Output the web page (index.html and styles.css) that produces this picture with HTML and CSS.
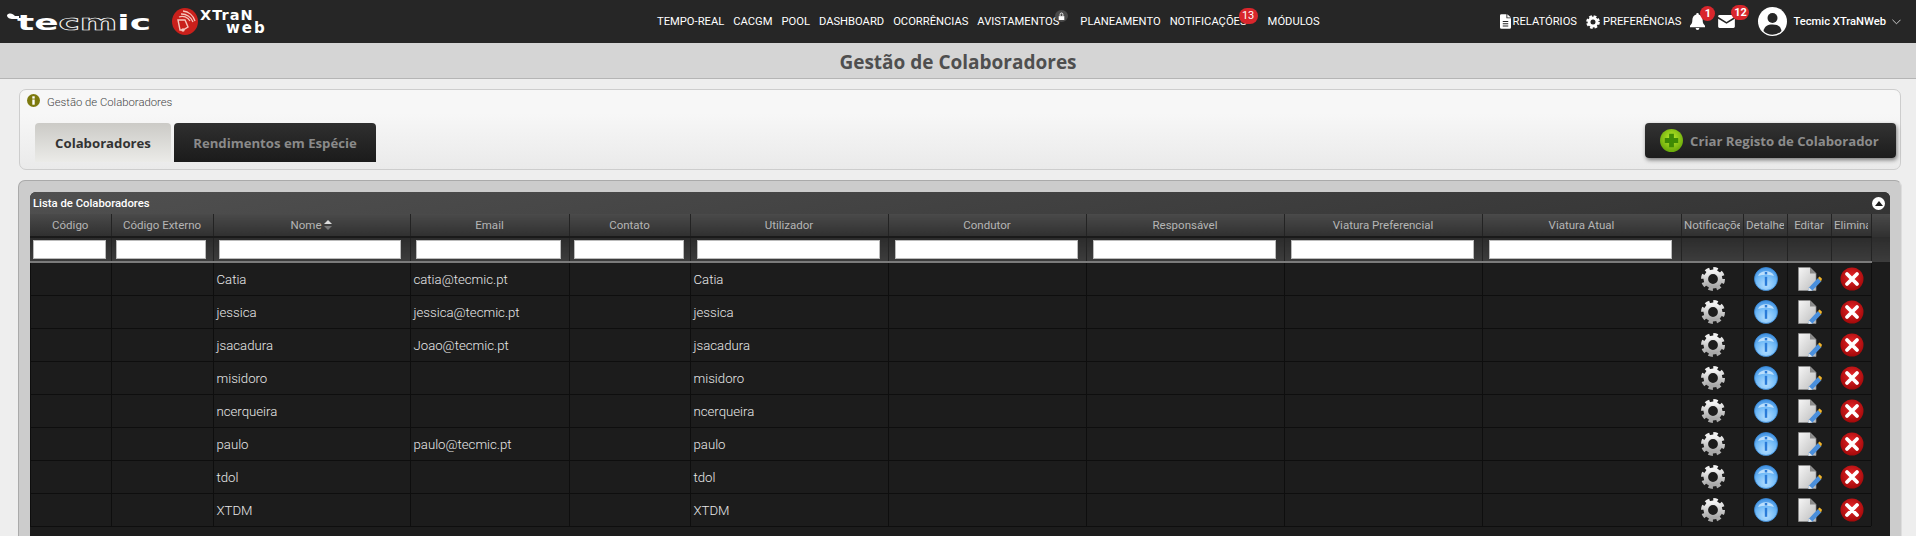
FILE: index.html
```html
<!DOCTYPE html>
<html lang="pt">
<head>
<meta charset="utf-8">
<title>Gestão de Colaboradores</title>
<link rel="stylesheet" href="styles.css">
</head>
<body>
<svg class="defs" width="0" height="0" aria-hidden="true">
  <defs>
    <linearGradient id="gGear" x1="0" y1="0" x2="0" y2="1"><stop offset="0" stop-color="#f2f2f2"/><stop offset="1" stop-color="#a8a8a8"/></linearGradient>
    <radialGradient id="gInfo" cx=".5" cy=".75" r=".75"><stop offset="0" stop-color="#b4deff"/><stop offset=".6" stop-color="#6fb9f7"/><stop offset="1" stop-color="#3f8fe0"/></radialGradient>
    <radialGradient id="gDel" cx=".5" cy=".4" r=".65"><stop offset="0" stop-color="#e8262a"/><stop offset="1" stop-color="#9c0606"/></radialGradient>
    <linearGradient id="gDoc" x1="0" y1="0" x2="1" y2="1"><stop offset="0" stop-color="#f6f6f6"/><stop offset="1" stop-color="#bdbdbd"/></linearGradient>
    <radialGradient id="gPlus" cx=".5" cy=".4" r=".65"><stop offset="0" stop-color="#bdec2c"/><stop offset="1" stop-color="#5fa206"/></radialGradient>
    <symbol id="i-gear" viewBox="0 0 24 24">
      <circle cx="12" cy="12" r="10" fill="none" stroke="url(#gGear)" stroke-width="4" stroke-dasharray="4.3 3.55"/>
      <circle cx="12" cy="12" r="7.2" fill="none" stroke="url(#gGear)" stroke-width="4.6"/>
    </symbol>
    <symbol id="i-info" viewBox="0 0 24 24">
      <circle cx="12" cy="12" r="11.5" fill="url(#gInfo)" stroke="#3a8ad8" stroke-width=".8"/>
      <path d="M4 9a8.5 7 0 0 1 16 0a14 6 0 0 0-16 0z" fill="#d9efff" opacity=".75"/>
      <rect x="10.8" y="5" width="2.4" height="2.400" fill="#2a7bd8"/>
      <rect x="10.8" y="9.800" width="2.4" height="9" fill="#2a7bd8"/>
    </symbol>
    <symbol id="i-doc" viewBox="0 0 24 24">
      <path d="M.5.5H12L18 6.500V23.500H.5z" fill="url(#gDoc)" stroke="#8f8f8f" stroke-width=".7"/>
      <path d="M12 .5V6.500H18z" fill="#8a8a8a"/>
      <path d="M11 20.500L20 11l3.400 3.200-9 9.300-4 .5z" fill="#4a8fdc"/>
      <path d="M20 11l1.600-1.600 2.400 2.400-1 2.600z" fill="#f3b52a"/>
      <path d="M11 20.500l3.400 3-4 .5z" fill="#e8e8e8"/>
    </symbol>
    <symbol id="i-del" viewBox="0 0 24 24">
      <circle cx="12" cy="12" r="11.500" fill="url(#gDel)"/>
      <path d="M7 7l10 10M17 7L7 17" stroke="#fff" stroke-width="3.800" stroke-linecap="round"/>
    </symbol>
  </defs>
</svg>

<header class="topbar">
  <div class="brand">
    <svg class="logo-tecmic" viewBox="0 0 146 18" width="146" height="18"><path d="M0 2c3-3 6-1 8 1h4v3H6C3 6 0 5 0 2z" fill="#fff"/><text x="10" y="16.500" textLength="134" lengthAdjust="spacingAndGlyphs" class="logo-word">te<tspan class="logo-m">cm</tspan>ic</text></svg>
    <svg class="logo-mark" viewBox="0 0 26 27" width="26" height="27">
      <ellipse cx="13" cy="13.500" rx="13" ry="13.500" fill="#c9201b"/>
      <path d="M7 9a9 9 0 0 1 11 4M9 6a12 12 0 0 1 12 8M11 3a14 14 0 0 1 12 10" fill="none" stroke="#f6c7bd" stroke-width="1.300"/>
      <path d="M6 12h7l3 7-5 3H8z" fill="none" stroke="#f6c7bd" stroke-width="1.400"/>
      <circle cx="11" cy="22" r="1.700" fill="#f6c7bd"/>
    </svg>
    <div class="logo-xtran"><span class="lx1">XTraN</span><span class="lx2">web</span></div>
  </div>
  <nav class="mainnav">
    <a>TEMPO-REAL</a><a>CACGM</a><a>POOL</a><a>DASHBOARD</a><a>OCORRÊNCIAS</a>
    <a class="locked">AVISTAMENTOS<span class="lock"><svg viewBox="0 0 10 12" width="7" height="9"><path d="M1 5.500h8V11H1z" fill="#fff"/><path d="M3 5.500V3a2 2 0 0 1 4 0v2.500" fill="none" stroke="#fff" stroke-width="1.300"/></svg></span></a>
    <a>PLANEAMENTO</a>
    <a class="has-badge">NOTIFICAÇÕES<span class="badge badge-nav">13</span></a>
    <a>MÓDULOS</a>
  </nav>
  <div class="usernav">
    <a class="ulink"><svg viewBox="0 0 12 16" width="11" height="15"><path d="M0 1.500A1.500 1.500 0 0 1 1.500 0H7v4.500h5V14.500A1.500 1.500 0 0 1 10.500 16h-9A1.500 1.500 0 0 1 0 14.500z" fill="#fff"/><path d="M8 0l4 3.500H8z" fill="#fff"/><path d="M3 8h6M3 10.500h6M3 13h6" stroke="#262626" stroke-width="1.100"/></svg>RELATÓRIOS</a>
    <a class="ulink ulink-pref"><svg viewBox="0 0 24 24" width="14" height="14"><circle cx="12" cy="12" r="9.500" fill="none" stroke="#fff" stroke-width="4.500" stroke-dasharray="4.500 2.960"/><circle cx="12" cy="12" r="6.800" fill="none" stroke="#fff" stroke-width="5"/></svg>PREFERÊNCIAS</a>
    <span class="ibtn ibtn-bell"><svg viewBox="0 0 16 18" width="15" height="17"><path d="M8 0a1.300 1.300 0 0 1 1.300 1.500C12 2 13.500 4.500 13.500 7.500c0 3.500 1 4.500 2.500 6V15H0v-1.500C1.500 12 2.500 11 2.500 7.500c0-3 1.500-5.500 4.200-6A1.300 1.300 0 0 1 8 0z" fill="#fff"/><path d="M6 16h4a2 2 0 0 1-4 0z" fill="#fff"/></svg><span class="badge badge-bell">1</span></span>
    <span class="ibtn ibtn-mail"><svg viewBox="0 0 18 14" width="17" height="13"><path d="M1.500 0h15A1.500 1.500 0 0 1 18 1.500v.5L9 7.500 0 2v-.5A1.500 1.500 0 0 1 1.500 0z" fill="#fff"/><path d="M0 4l9 5.500L18 4v8.500a1.500 1.500 0 0 1-1.500 1.500h-15A1.500 1.500 0 0 1 0 12.500z" fill="#fff"/></svg><span class="badge badge-mail">12</span></span>
    <span class="avatar"><svg viewBox="0 0 29 29" width="29" height="29"><circle cx="14.500" cy="14.500" r="14.500" fill="#fff"/><circle cx="14.500" cy="11" r="5" fill="#262626"/><path d="M5.500 24c1-5 4-6.500 9-6.500s8 1.500 9 6.500a12.500 12.500 0 0 1-18 0z" fill="#262626"/></svg></span>
    <span class="uname">Tecmic XTraNWeb</span>
    <svg class="chev" viewBox="0 0 10 6" width="9" height="6"><path d="M.5.5L5 5l4.500-4.500" fill="none" stroke="#ddd" stroke-width="1"/></svg>
  </div>
</header>

<div class="titleband"><h1>Gestão de Colaboradores</h1></div>

<main class="page">
  <section class="tabpanel">
    <div class="crumb">
      <svg viewBox="0 0 13 13" width="13" height="13"><circle cx="6.500" cy="6.500" r="6.500" fill="#7d7a0f"/><rect x="5.300" y="2.300" width="2.400" height="2.300" fill="#fff"/><rect x="5.300" y="5.500" width="2.400" height="5.200" fill="#fff"/></svg>
      <span>Gestão de Colaboradores</span>
    </div>
    <div class="tabrow">
      <a class="tab tab-on">Colaboradores</a>
      <a class="tab">Rendimentos em Espécie</a>
      <a class="createbtn">
        <svg viewBox="0 0 24 24" width="23" height="23"><circle cx="12" cy="12" r="12" fill="url(#gPlus)"/><path d="M9.500 5h5v4.500H19v5h-4.500V19h-5v-4.500H5v-5h4.500z" fill="#3e8a04"/></svg>
        <span>Criar Registo de Colaborador</span>
      </a>
    </div>
  </section>

  <section class="listpanel">
    <div class="listbox">
      <div class="listhead"><span>Lista de Colaboradores</span><span class="collapse"><svg viewBox="0 0 8 5" width="8" height="5"><path d="M0 5L4 0l4 5z" fill="#1d1d1d"/></svg></span></div>
      <table class="grid">
        <colgroup>
          <col class="c81"><col class="c102"><col class="c197"><col class="c159"><col class="c121"><col class="c198"><col class="c198"><col class="c198"><col class="c198"><col class="c199"><col class="c62"><col class="c44"><col class="c44"><col class="c40"><col class="c19">
        </colgroup>
        <thead>
          <tr class="hrow">
            <th>Código</th><th>Código Externo</th><th>Nome <svg class="sort" viewBox="0 0 8 10" width="8" height="10"><path d="M0 4l4-4 4 4z" fill="#ddd"/><path d="M0 6l4 4 4-4z" fill="#777"/></svg></th><th>Email</th><th>Contato</th><th>Utilizador</th><th>Condutor</th><th>Responsável</th><th>Viatura Preferencial</th><th>Viatura Atual</th><th class="tight"><span class="clip clip-n">Notificações</span></th><th class="tight"><span class="clip clip-d">Detalhe</span></th><th class="tight">Editar</th><th class="tight"><span class="clip clip-e">Eliminar</span></th><th class="blank"></th>
          </tr>
          <tr class="frow">
            <th class="f1"><input type="text" aria-label="Código"></th><th class="f2"><input type="text" aria-label="Código Externo"></th><th class="f3"><input type="text" aria-label="Nome"></th><th class="f4"><input type="text" aria-label="Email"></th><th class="f5"><input type="text" aria-label="Contato"></th><th class="f6"><input type="text" aria-label="Utilizador"></th><th class="f6"><input type="text" aria-label="Condutor"></th><th class="f6"><input type="text" aria-label="Responsável"></th><th class="f6"><input type="text" aria-label="Viatura Preferencial"></th><th class="f6"><input type="text" aria-label="Viatura Atual"></th><th></th><th></th><th></th><th></th><th class="blank"></th>
          </tr>
        </thead>
        <tbody>
          <tr><td></td><td></td><td>Catia</td><td>catia@tecmic.pt</td><td></td><td>Catia</td><td></td><td></td><td></td><td></td><td class="ic"><svg width="24" height="24"><use href="#i-gear"/></svg></td><td class="ic"><svg width="24" height="24"><use href="#i-info"/></svg></td><td class="ic"><svg width="24" height="24"><use href="#i-doc"/></svg></td><td class="ic"><svg width="24" height="24"><use href="#i-del"/></svg></td><td class="blank"></td></tr>
          <tr><td></td><td></td><td>jessica</td><td>jessica@tecmic.pt</td><td></td><td>jessica</td><td></td><td></td><td></td><td></td><td class="ic"><svg width="24" height="24"><use href="#i-gear"/></svg></td><td class="ic"><svg width="24" height="24"><use href="#i-info"/></svg></td><td class="ic"><svg width="24" height="24"><use href="#i-doc"/></svg></td><td class="ic"><svg width="24" height="24"><use href="#i-del"/></svg></td><td class="blank"></td></tr>
          <tr><td></td><td></td><td>jsacadura</td><td>Joao@tecmic.pt</td><td></td><td>jsacadura</td><td></td><td></td><td></td><td></td><td class="ic"><svg width="24" height="24"><use href="#i-gear"/></svg></td><td class="ic"><svg width="24" height="24"><use href="#i-info"/></svg></td><td class="ic"><svg width="24" height="24"><use href="#i-doc"/></svg></td><td class="ic"><svg width="24" height="24"><use href="#i-del"/></svg></td><td class="blank"></td></tr>
          <tr><td></td><td></td><td>misidoro</td><td></td><td></td><td>misidoro</td><td></td><td></td><td></td><td></td><td class="ic"><svg width="24" height="24"><use href="#i-gear"/></svg></td><td class="ic"><svg width="24" height="24"><use href="#i-info"/></svg></td><td class="ic"><svg width="24" height="24"><use href="#i-doc"/></svg></td><td class="ic"><svg width="24" height="24"><use href="#i-del"/></svg></td><td class="blank"></td></tr>
          <tr><td></td><td></td><td>ncerqueira</td><td></td><td></td><td>ncerqueira</td><td></td><td></td><td></td><td></td><td class="ic"><svg width="24" height="24"><use href="#i-gear"/></svg></td><td class="ic"><svg width="24" height="24"><use href="#i-info"/></svg></td><td class="ic"><svg width="24" height="24"><use href="#i-doc"/></svg></td><td class="ic"><svg width="24" height="24"><use href="#i-del"/></svg></td><td class="blank"></td></tr>
          <tr><td></td><td></td><td>paulo</td><td>paulo@tecmic.pt</td><td></td><td>paulo</td><td></td><td></td><td></td><td></td><td class="ic"><svg width="24" height="24"><use href="#i-gear"/></svg></td><td class="ic"><svg width="24" height="24"><use href="#i-info"/></svg></td><td class="ic"><svg width="24" height="24"><use href="#i-doc"/></svg></td><td class="ic"><svg width="24" height="24"><use href="#i-del"/></svg></td><td class="blank"></td></tr>
          <tr><td></td><td></td><td>tdol</td><td></td><td></td><td>tdol</td><td></td><td></td><td></td><td></td><td class="ic"><svg width="24" height="24"><use href="#i-gear"/></svg></td><td class="ic"><svg width="24" height="24"><use href="#i-info"/></svg></td><td class="ic"><svg width="24" height="24"><use href="#i-doc"/></svg></td><td class="ic"><svg width="24" height="24"><use href="#i-del"/></svg></td><td class="blank"></td></tr>
          <tr><td></td><td></td><td>XTDM</td><td></td><td></td><td>XTDM</td><td></td><td></td><td></td><td></td><td class="ic"><svg width="24" height="24"><use href="#i-gear"/></svg></td><td class="ic"><svg width="24" height="24"><use href="#i-info"/></svg></td><td class="ic"><svg width="24" height="24"><use href="#i-doc"/></svg></td><td class="ic"><svg width="24" height="24"><use href="#i-del"/></svg></td><td class="blank"></td></tr>
        </tbody>
      </table>
    </div>
  </section>
</main>
</body>
</html>
```

FILE: styles.css
```css
* { box-sizing: border-box; }
html, body { margin: 0; height: 536px; overflow: hidden; }
body { background: #eee; font-family: Roboto, "Liberation Sans", sans-serif; color: #333; }
.defs { position: absolute; }
a { color: inherit; text-decoration: none; }

.topbar { height: 43px; background: #262626; display: flex; align-items: center; color: #fff; font-size: 11.2px; }
.brand { width: 657px; display: flex; align-items: center; padding-left: 7px; flex: none; }
.brand svg { overflow: visible; flex: none; }
.logo-word { font: 700 22px "DejaVu Sans", sans-serif; fill: #fff; }
.logo-m { fill: none; stroke: #fff; stroke-width: .7px; }
.logo-tecmic { margin-top: 1px; }
.logo-mark { margin-left: 19px; }
.logo-xtran { margin-left: 2px; width: 76px; height: 26px; display: flex; flex-direction: column; color: #fff; font-family: "DejaVu Sans", sans-serif; font-weight: 700; white-space: nowrap; }
.lx1 { font-size: 14.5px; line-height: 13px; letter-spacing: 1px; }
.lx2 { font-size: 15px; line-height: 13px; padding-left: 26px; letter-spacing: 2px; }
.mainnav { display: flex; gap: 9px; white-space: nowrap; }
.mainnav a { position: relative; display: block; }
.locked { margin-right: 12px; }
.lock { position: absolute; right: -9px; top: -5px; width: 13px; height: 12px; border-radius: 50%; background: #4a4a4a; display: flex; align-items: center; justify-content: center; }
.badge { position: absolute; background: #d9262c; color: #fff; border-radius: 10px; font-size: 11px; line-height: 16px; height: 16px; text-align: center; }
.badge-nav { right: -11px; top: -7px; width: 19px; }
.has-badge { margin-right: 12px; }
.usernav { margin-left: auto; display: flex; align-items: center; padding-right: 15px; }
.ulink { display: flex; align-items: center; gap: 2px; }
.ulink-pref { margin-left: 9px; gap: 3px; }
.ibtn { position: relative; display: flex; }
.ibtn-bell { margin-left: 9px; }
.ibtn-mail { margin-left: 13px; }
.badge-bell { left: 10px; top: -7px; width: 15px; height: 15px; line-height: 15px; font-weight: 700; }
.badge-mail { left: 13px; top: -10px; width: 18px; height: 15px; line-height: 15px; font-weight: 700; }
.avatar { margin-left: 23px; display: flex; }
.uname { margin-left: 6px; font-weight: 500; }
.chev { margin-left: 6px; }

.titleband { height: 36px; background: #d5d5d5; border-bottom: 1px solid #b5b5b5; display: flex; align-items: center; justify-content: center; }
.titleband h1 { margin: 0; font: 700 19px "Open Sans", sans-serif; color: #4f4f4f; position: relative; top: 1px; }

.page { padding: 10px 15px 0 19px; }
.tabpanel { height: 81px; border: 1px solid #cdcdcd; border-radius: 7px; background: linear-gradient(#f7f7f7 30%, #eaeaea); padding: 1px 4px 0 6px; }
.crumb { display: flex; align-items: center; gap: 7px; font-size: 11.3px; font-weight: 300; color: #444; height: 22px; margin-left: 1px; }
.crumb svg { margin-top: -4px; }
.tabrow { display: flex; align-items: flex-start; padding-left: 9px; margin-top: 10px; }
.tab { height: 39px; width: 136px; border-radius: 4px 4px 0 0; background: linear-gradient(#2f2f2f, #1b1b1b); color: #8a8a8a; font: 700 13.2px/41px "Open Sans", sans-serif; text-align: center; }
.tab + .tab { margin-left: 3px; width: 202px; }
.tab-on { background: linear-gradient(#cbcac6, #ebebe8); color: #333; }
.createbtn { margin-left: auto; height: 35px; width: 251px; border-radius: 4px; background: linear-gradient(#333, #1c1c1c); box-shadow: 1px 2px 4px rgba(0,0,0,.5); color: #8c8c8c; display: flex; align-items: center; padding-left: 15px; gap: 7px; font: 700 13.2px "Open Sans", sans-serif; white-space: nowrap; }

.listpanel { margin-top: 10px; width: 1884px; margin-left: -1px; background: #ccc; border: 1px solid #aaa; border-bottom: 0; border-right-color: #ddd; border-radius: 7px 7px 0 0; padding: 11px 11px 0 11px; }
.listbox { background: #1c1c1c; border-radius: 6px 6px 0 0; width: 1860px; padding-bottom: 20px; }
.listhead { height: 22px; border-radius: 6px 6px 0 0; background: linear-gradient(170deg, #505050, #343434); color: #fff; font-size: 11.3px; font-weight: 500; display: flex; align-items: center; justify-content: space-between; padding: 0 4px 0 3px; }
.collapse { width: 13px; height: 13px; border-radius: 50%; background: #fff; display: flex; align-items: center; justify-content: center; margin-right: 1px; }

.grid { border-collapse: collapse; table-layout: fixed; width: 1860px; color: #ddd; }
.c81 { width: 81px; } .c102 { width: 102px; } .c197 { width: 197px; } .c159 { width: 159px; } .c121 { width: 121px; } .c198 { width: 198px; } .c199 { width: 199px; } .c62 { width: 62px; } .c44 { width: 44px; } .c40 { width: 40px; } .c19 { width: 19px; }
.hrow th { height: 23px; padding: 0 3px; font-size: 11.5px; font-weight: 400; color: #b5b5b5; background: linear-gradient(#4a4a4a, #303030); border-right: 1px solid #232323; border-bottom: 2px solid #1a1a1a; white-space: nowrap; overflow: hidden; }
.hrow th.tight { padding: 0; text-align: center; }
.clip { display: block; overflow: hidden; margin: 0 auto; text-align: left; white-space: nowrap; }
.clip-n { width: 56px; } .clip-d { width: 38px; } .clip-e { width: 34px; }
.sort { vertical-align: -1px; }
.frow th { height: 25px; padding: 0; background: linear-gradient(#2c2c2c, #3c3c3c); border-right: 1px solid #232323; border-bottom: 2px solid #7b7b7b; }
th.blank, td.blank { border: 0 !important; box-shadow: none !important; }
.frow input { display: block; height: 19px; border: 1px solid #bbb; background: #fff; padding: 0; margin: 0; }
.f1 input { width: 73px; margin-left: 3px; }
.f2 input { width: 90px; margin-left: 4px; }
.f3 input { width: 182px; margin-left: 5px; }
.f4 input { width: 145px; margin-left: 5px; }
.f5 input { width: 110px; margin-left: 4px; }
.f6 input { width: 183px; margin-left: 6px; }
tbody td { height: 33px; padding: 2px 4px 0 3.5px; font-size: 13.2px; font-weight: 300; color: #e8e8e8; background: #1c1c1c; box-shadow: inset 1px 0 0 #0e0e0e; border-bottom: 1px solid #0e0e0e; white-space: nowrap; overflow: hidden; }
tbody td.blank { box-shadow: inset 1px 0 0 #0e0e0e !important; }
td.ic { padding: 0 0 0 1px; }
td.ic svg { display: block; margin: 0 auto; }
```
